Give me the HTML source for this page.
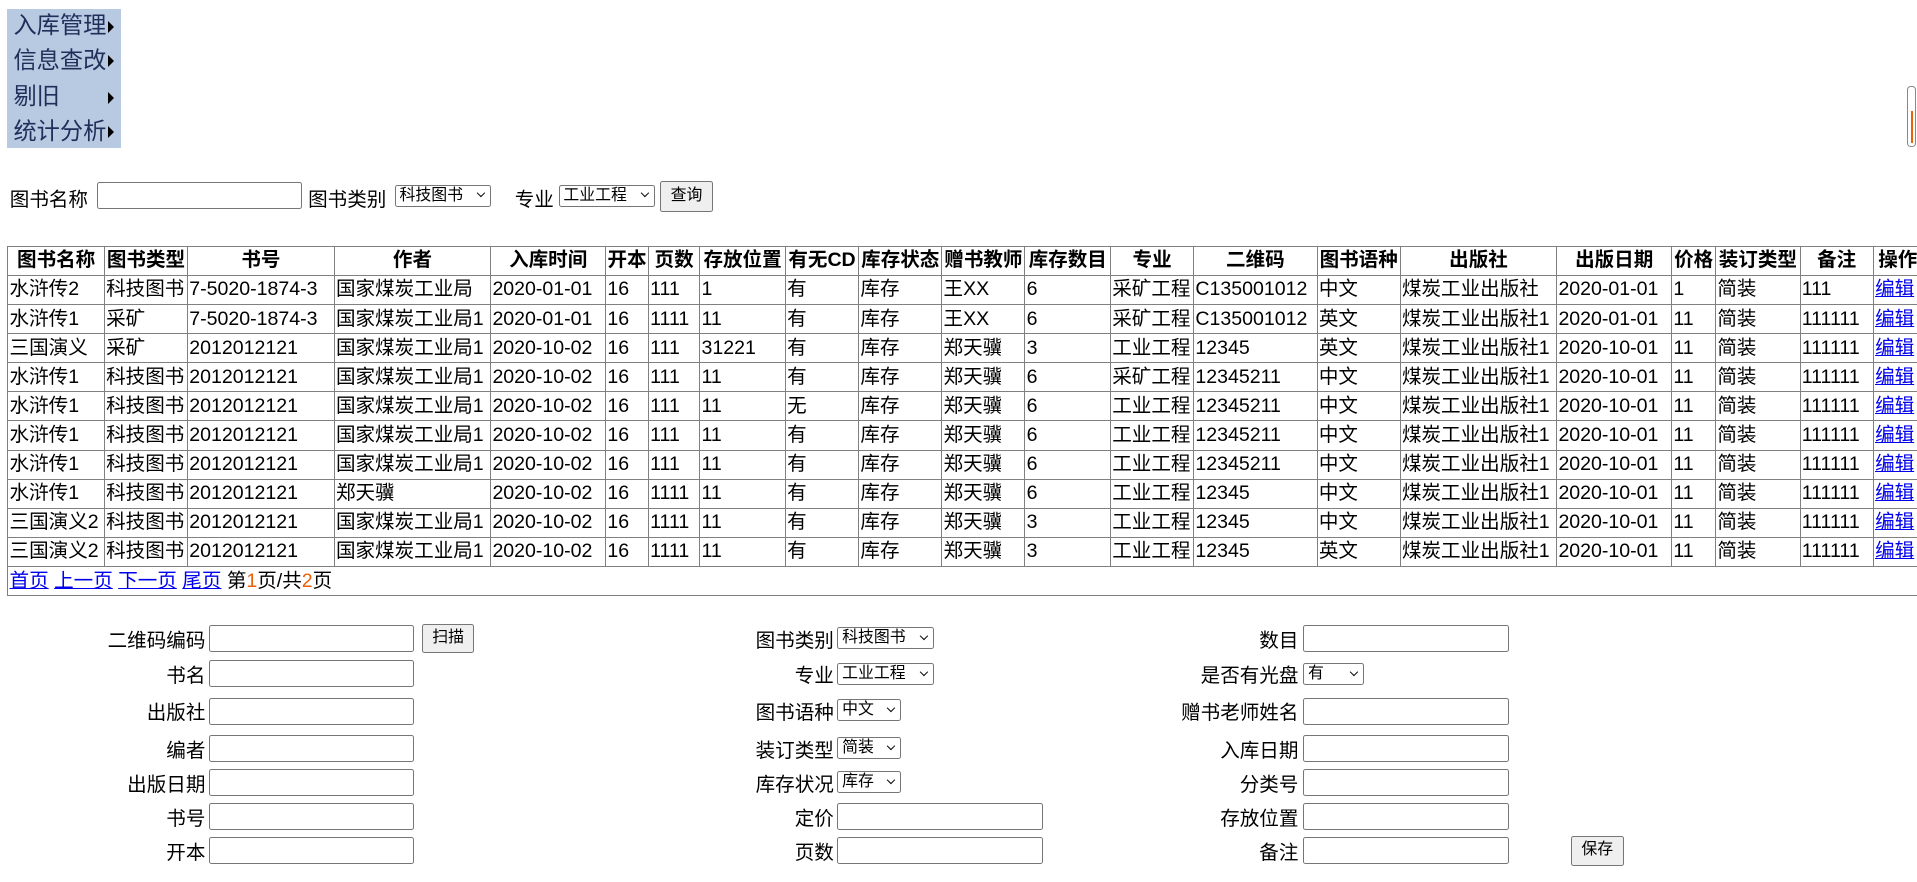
<!DOCTYPE html>
<html><head><meta charset="utf-8">
<style>
html,body{margin:0;padding:0;background:#fff;overflow:hidden;width:1917px;height:882px}
#w{zoom:1.2226;width:1568px;height:722px;position:relative;font-family:"Liberation Sans","Noto Sans CJK SC",sans-serif;font-size:16px;color:#000}
.menu{position:absolute;left:6px;top:7px;width:93px;height:114px;background:#b8c9e2}
.menu div{position:absolute;left:5px;font-size:19px;color:#1f2f5a;line-height:20px}
.menu span{position:absolute;left:82px;width:0;height:0;border-left:5px solid #000;border-top:5px solid transparent;border-bottom:5px solid transparent}
.a{position:absolute;white-space:nowrap}
input.t{position:absolute;border:1px solid #767676;border-radius:2px;padding:0;box-sizing:border-box;height:22px}
.sel{position:absolute;height:18px;border:1px solid #767676;border-radius:2px;font-size:13px;line-height:17px;padding-left:3px;box-sizing:border-box;background:#fff}
.sel:after{content:"";position:absolute;right:5px;top:4px;width:4px;height:4px;border-right:1.5px solid #000;border-bottom:1.5px solid #000;transform:rotate(45deg)}
.btn{position:absolute;border:1px solid #767676;border-radius:2px;background:#efefef;font-size:13px;text-align:center;box-sizing:border-box}
table{position:absolute;left:6px;top:201px;border-collapse:collapse;table-layout:fixed;width:1566px;font-size:16px}
td,th{border:1px solid #808080;padding:0 1px;height:23px;white-space:nowrap;overflow:hidden;line-height:22px}
th{text-align:center;font-weight:bold}
td{text-align:left}
a{color:#0000ee;text-decoration:underline}
.r{text-align:right;width:100px}
.o{color:#e8620a}
</style></head><body><div id="w">
<div class="menu">
<div style="top:4px">入库管理</div><span style="top:10px"></span>
<div style="top:32px">信息查改</div><span style="top:38px"></span>
<div style="top:62px">剔旧</div><span style="top:68px"></span>
<div style="top:90px">统计分析</div><span style="top:96px"></span>
</div>
<div style="position:absolute;left:1560px;top:70px;width:7px;height:50px;border:1px solid #888;border-radius:3px;box-sizing:border-box"><div style="position:absolute;left:2px;top:20px;width:2px;height:26px;background:#e8620a"></div></div>

<div class="a" style="left:8px;top:150px">图书名称</div>
<input class="t" style="left:79px;top:149px;width:168px">
<div class="a" style="left:252px;top:150px">图书类别</div>
<div class="sel" style="left:323px;top:151px;width:79px">科技图书</div>
<div class="a" style="left:421px;top:150px">专业</div>
<div class="sel" style="left:457px;top:151px;width:79px">工业工程</div>
<div class="btn" style="left:540px;top:148px;width:43px;height:25px;line-height:23px">查询</div>

<table>
<colgroup><col style="width:79px"><col style="width:68px"><col style="width:120px"><col style="width:128px"><col style="width:94px"><col style="width:35px"><col style="width:42px"><col style="width:70px"><col style="width:60px"><col style="width:68px"><col style="width:68px"><col style="width:70px"><col style="width:68px"><col style="width:101px"><col style="width:68px"><col style="width:128px"><col style="width:94px"><col style="width:36px"><col style="width:69px"><col style="width:60px"><col style="width:40px"></colgroup>
<tr><th>图书名称</th><th>图书类型</th><th>书号</th><th>作者</th><th>入库时间</th><th>开本</th><th>页数</th><th>存放位置</th><th>有无CD</th><th>库存状态</th><th>赠书教师</th><th>库存数目</th><th>专业</th><th>二维码</th><th>图书语种</th><th>出版社</th><th>出版日期</th><th>价格</th><th>装订类型</th><th>备注</th><th>操作</th></tr>
<tr><td>水浒传2</td><td>科技图书</td><td>7-5020-1874-3</td><td>国家煤炭工业局</td><td>2020-01-01</td><td>16</td><td>111</td><td>1</td><td>有</td><td>库存</td><td>王XX</td><td>6</td><td>采矿工程</td><td>C135001012</td><td>中文</td><td>煤炭工业出版社</td><td>2020-01-01</td><td>1</td><td>简装</td><td>111</td><td><a>编辑</a></td></tr>
<tr><td>水浒传1</td><td>采矿</td><td>7-5020-1874-3</td><td>国家煤炭工业局1</td><td>2020-01-01</td><td>16</td><td>1111</td><td>11</td><td>有</td><td>库存</td><td>王XX</td><td>6</td><td>采矿工程</td><td>C135001012</td><td>英文</td><td>煤炭工业出版社1</td><td>2020-01-01</td><td>11</td><td>简装</td><td>111111</td><td><a>编辑</a></td></tr>
<tr><td>三国演义</td><td>采矿</td><td>2012012121</td><td>国家煤炭工业局1</td><td>2020-10-02</td><td>16</td><td>111</td><td>31221</td><td>有</td><td>库存</td><td>郑天骥</td><td>3</td><td>工业工程</td><td>12345</td><td>英文</td><td>煤炭工业出版社1</td><td>2020-10-01</td><td>11</td><td>简装</td><td>111111</td><td><a>编辑</a></td></tr>
<tr><td>水浒传1</td><td>科技图书</td><td>2012012121</td><td>国家煤炭工业局1</td><td>2020-10-02</td><td>16</td><td>111</td><td>11</td><td>有</td><td>库存</td><td>郑天骥</td><td>6</td><td>采矿工程</td><td>12345211</td><td>中文</td><td>煤炭工业出版社1</td><td>2020-10-01</td><td>11</td><td>简装</td><td>111111</td><td><a>编辑</a></td></tr>
<tr><td>水浒传1</td><td>科技图书</td><td>2012012121</td><td>国家煤炭工业局1</td><td>2020-10-02</td><td>16</td><td>111</td><td>11</td><td>无</td><td>库存</td><td>郑天骥</td><td>6</td><td>工业工程</td><td>12345211</td><td>中文</td><td>煤炭工业出版社1</td><td>2020-10-01</td><td>11</td><td>简装</td><td>111111</td><td><a>编辑</a></td></tr>
<tr><td>水浒传1</td><td>科技图书</td><td>2012012121</td><td>国家煤炭工业局1</td><td>2020-10-02</td><td>16</td><td>111</td><td>11</td><td>有</td><td>库存</td><td>郑天骥</td><td>6</td><td>工业工程</td><td>12345211</td><td>中文</td><td>煤炭工业出版社1</td><td>2020-10-01</td><td>11</td><td>简装</td><td>111111</td><td><a>编辑</a></td></tr>
<tr><td>水浒传1</td><td>科技图书</td><td>2012012121</td><td>国家煤炭工业局1</td><td>2020-10-02</td><td>16</td><td>111</td><td>11</td><td>有</td><td>库存</td><td>郑天骥</td><td>6</td><td>工业工程</td><td>12345211</td><td>中文</td><td>煤炭工业出版社1</td><td>2020-10-01</td><td>11</td><td>简装</td><td>111111</td><td><a>编辑</a></td></tr>
<tr><td>水浒传1</td><td>科技图书</td><td>2012012121</td><td>郑天骥</td><td>2020-10-02</td><td>16</td><td>1111</td><td>11</td><td>有</td><td>库存</td><td>郑天骥</td><td>6</td><td>工业工程</td><td>12345</td><td>中文</td><td>煤炭工业出版社1</td><td>2020-10-01</td><td>11</td><td>简装</td><td>111111</td><td><a>编辑</a></td></tr>
<tr><td>三国演义2</td><td>科技图书</td><td>2012012121</td><td>国家煤炭工业局1</td><td>2020-10-02</td><td>16</td><td>1111</td><td>11</td><td>有</td><td>库存</td><td>郑天骥</td><td>3</td><td>工业工程</td><td>12345</td><td>中文</td><td>煤炭工业出版社1</td><td>2020-10-01</td><td>11</td><td>简装</td><td>111111</td><td><a>编辑</a></td></tr>
<tr><td>三国演义2</td><td>科技图书</td><td>2012012121</td><td>国家煤炭工业局1</td><td>2020-10-02</td><td>16</td><td>1111</td><td>11</td><td>有</td><td>库存</td><td>郑天骥</td><td>3</td><td>工业工程</td><td>12345</td><td>英文</td><td>煤炭工业出版社1</td><td>2020-10-01</td><td>11</td><td>简装</td><td>111111</td><td><a>编辑</a></td></tr>
<tr><td colspan="21" style="border-left:1px solid #808080"><a>首页</a> <a>上一页</a> <a>下一页</a> <a>尾页</a> 第<span class="o">1</span>页/共<span class="o">2</span>页</td></tr>
</table>

<div class="a r" style="left:68px;top:510px">二维码编码</div><input class="t" style="left:171px;top:511px;width:168px">
<div class="btn" style="left:345px;top:510px;width:43px;height:24px;line-height:22px">扫描</div>
<div class="a r" style="left:68px;top:539px">书名</div><input class="t" style="left:171px;top:540px;width:168px">
<div class="a r" style="left:68px;top:569px">出版社</div><input class="t" style="left:171px;top:571px;width:168px">
<div class="a r" style="left:68px;top:600px">编者</div><input class="t" style="left:171px;top:601px;width:168px">
<div class="a r" style="left:68px;top:628px">出版日期</div><input class="t" style="left:171px;top:629px;width:168px">
<div class="a r" style="left:68px;top:656px">书号</div><input class="t" style="left:171px;top:657px;width:168px">
<div class="a r" style="left:68px;top:684px">开本</div><input class="t" style="left:171px;top:685px;width:168px">

<div class="a r" style="left:582px;top:510px">图书类别</div><div class="sel" style="left:685px;top:513px;width:79px">科技图书</div>
<div class="a r" style="left:582px;top:539px">专业</div><div class="sel" style="left:685px;top:542px;width:79px">工业工程</div>
<div class="a r" style="left:582px;top:569px">图书语种</div><div class="sel" style="left:685px;top:572px;width:52px">中文</div>
<div class="a r" style="left:582px;top:600px">装订类型</div><div class="sel" style="left:685px;top:603px;width:52px">简装</div>
<div class="a r" style="left:582px;top:628px">库存状况</div><div class="sel" style="left:685px;top:631px;width:52px">库存</div>
<div class="a r" style="left:582px;top:656px">定价</div><input class="t" style="left:685px;top:657px;width:168px">
<div class="a r" style="left:582px;top:684px">页数</div><input class="t" style="left:685px;top:685px;width:168px">

<div class="a r" style="left:962px;top:510px">数目</div><input class="t" style="left:1066px;top:511px;width:168px">
<div class="a r" style="left:962px;top:539px">是否有光盘</div><div class="sel" style="left:1066px;top:542px;width:50px">有</div>
<div class="a r" style="left:962px;top:569px">赠书老师姓名</div><input class="t" style="left:1066px;top:571px;width:168px">
<div class="a r" style="left:962px;top:600px">入库日期</div><input class="t" style="left:1066px;top:601px;width:168px">
<div class="a r" style="left:962px;top:628px">分类号</div><input class="t" style="left:1066px;top:629px;width:168px">
<div class="a r" style="left:962px;top:656px">存放位置</div><input class="t" style="left:1066px;top:657px;width:168px">
<div class="a r" style="left:962px;top:684px">备注</div><input class="t" style="left:1066px;top:685px;width:168px">
<div class="btn" style="left:1285px;top:684px;width:43px;height:24px;line-height:22px">保存</div>
</div></body></html>
